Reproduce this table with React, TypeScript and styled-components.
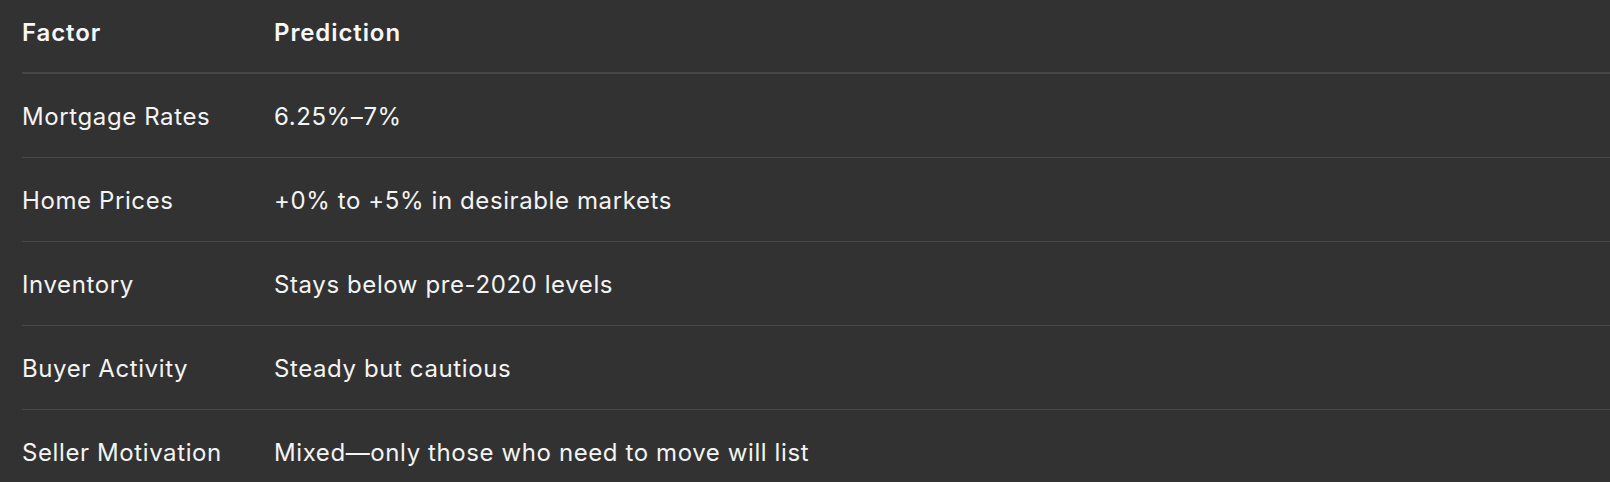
import React from "react";
import styled, { createGlobalStyle } from "styled-components";

const Global = createGlobalStyle`
  html, body {
    margin: 0;
    padding: 0;
    background: #323232;
  }
  body {
    font-family: Inter, "Noto Sans", "Liberation Sans", sans-serif;
    color: #f4f4f4;
    -webkit-font-smoothing: antialiased;
  }
`;

const Page = styled.div`
  width: 1610px;
  height: 482px;
  overflow: hidden;
  background: #323232;
  padding-left: 22px;
  box-sizing: border-box;
`;

const Table = styled.div`
  display: grid;
  grid-template-columns: 252px 1fr;
`;

const HeadCell = styled.div`
  height: 74px;
  box-sizing: border-box;
  display: flex;
  align-items: center;
  padding-bottom: 7px;
  font-size: 24px;
  font-weight: 600;
  letter-spacing: 0.9px;
  color: #f7f7f7;
  border-bottom: 2px solid #474747;
`;

const Cell = styled.div<{ $last?: boolean }>`
  height: 84px;
  box-sizing: border-box;
  display: flex;
  align-items: center;
  padding-top: 1px;
  font-size: 24px;
  font-weight: 400;
  letter-spacing: 0.6px;
  color: #f4f4f4;
  white-space: nowrap;
  border-bottom: ${(p) => (p.$last ? "none" : "1px solid #484848")};
`;

const rows: [string, string][] = [
  ["Mortgage Rates", "6.25%–7%"],
  ["Home Prices", "+0% to +5% in desirable markets"],
  ["Inventory", "Stays below pre-2020 levels"],
  ["Buyer Activity", "Steady but cautious"],
  ["Seller Motivation", "Mixed—only those who need to move will list"],
];

export default function App() {
  return (
    <>
      <Global />
      <Page>
        <Table>
          <HeadCell>Factor</HeadCell>
          <HeadCell>Prediction</HeadCell>
          {rows.map(([f, p], i) => (
            <React.Fragment key={f}>
              <Cell $last={i === rows.length - 1}>{f}</Cell>
              <Cell $last={i === rows.length - 1}>{p}</Cell>
            </React.Fragment>
          ))}
        </Table>
      </Page>
    </>
  );
}
